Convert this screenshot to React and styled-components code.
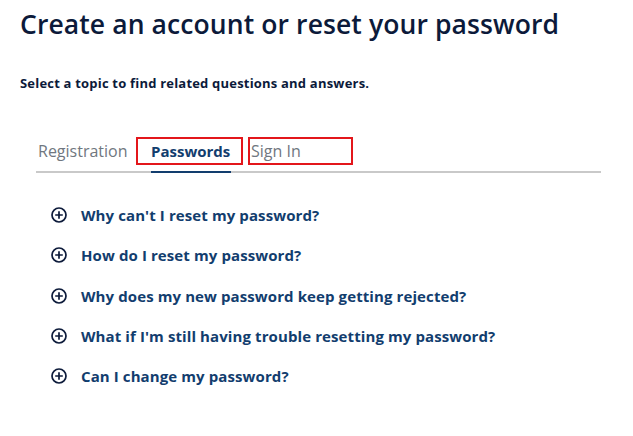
import React from 'react';
import styled, { createGlobalStyle } from 'styled-components';

const GlobalStyle = createGlobalStyle`
  body {
    margin: 0;
    background: #ffffff;
    font-family: 'Open Sans', 'Liberation Sans', Arial, sans-serif;
  }
`;

const Page = styled.div`
  padding: 8px 0 0 20px;
  width: 613px;
`;

const Title = styled.h1`
  margin: 0;
  font-size: 26.5px;
  font-weight: 600;
  letter-spacing: 0.1px;
  line-height: 33px;
  color: #0c1a3a;
`;

const Subtitle = styled.p`
  margin: 33px 0 0;
  font-size: 13px;
  font-weight: 700;
  letter-spacing: 0.2px;
  line-height: 18px;
  color: #0c1a3a;
`;

const TabList = styled.div`
  display: flex;
  align-items: center;
  margin: 45px 0 0 16px;
  width: 565px;
  border-bottom: 2px solid #c9c9c9;
  padding-bottom: 6px;
`;

const Tab = styled.button`
  position: relative;
  height: 28px;
  box-sizing: border-box;
  background: none;
  border: 2px solid ${(p) => (p.$outlined ? '#e3161b' : 'transparent')};
  padding: 0 ${(p) => p.$padRight}px 0 ${(p) => p.$padLeft}px;
  margin-right: ${(p) => p.$gap}px;
  width: ${(p) => p.$width}px;
  text-align: left;
  font-family: inherit;
  font-size: ${(p) => (p.$active ? 15 : 16)}px;
  font-weight: ${(p) => (p.$active ? 700 : 400)};
  color: ${(p) => (p.$active ? '#123d6e' : '#707780')};
  cursor: pointer;

  &::after {
    content: '';
    display: ${(p) => (p.$active ? 'block' : 'none')};
    position: absolute;
    left: 13px;
    right: 10px;
    bottom: -10px;
    height: 2px;
    background: #123d6e;
  }
`;

const FaqList = styled.ul`
  list-style: none;
  margin: 0;
  padding: 22px 0 0 31px;
`;

const FaqItem = styled.li`
  display: flex;
  align-items: center;
  gap: 14px;
  height: 40.3px;
  font-size: 15px;
  font-weight: 700;
  letter-spacing: 0.1px;
  color: #123d6e;
  cursor: pointer;
`;

const PlusIcon = () => (
  <svg width="16" height="16" viewBox="0 0 16 16" fill="none" stroke="#0c1a3a" strokeWidth="1.7">
    <circle cx="8" cy="8" r="7" />
    <path d="M8 4.2v7.6M4.2 8h7.6" />
  </svg>
);

const tabs = [
  { label: 'Registration', padLeft: 0, padRight: 0, width: 100, gap: 0 },
  { label: 'Passwords', padLeft: 13, padRight: 10, width: 107, gap: 5, active: true, outlined: true },
  { label: 'Sign In', padLeft: 1, padRight: 0, width: 105, gap: 0, outlined: true },
];

const questions = [
  "Why can't I reset my password?",
  'How do I reset my password?',
  'Why does my new password keep getting rejected?',
  "What if I'm still having trouble resetting my password?",
  'Can I change my password?',
];

const App = () => (
  <>
    <GlobalStyle />
    <Page>
      <Title>Create an account or reset your password</Title>
      <Subtitle>Select a topic to find related questions and answers.</Subtitle>
      <TabList>
        {tabs.map((t) => (
          <Tab
            key={t.label}
            $active={t.active}
            $outlined={t.outlined}
            $padLeft={t.padLeft}
            $padRight={t.padRight}
            $width={t.width}
            $gap={t.gap}
          >
            {t.label}
          </Tab>
        ))}
      </TabList>
      <FaqList>
        {questions.map((q) => (
          <FaqItem key={q}>
            <PlusIcon />
            {q}
          </FaqItem>
        ))}
      </FaqList>
    </Page>
  </>
);

export default App;
